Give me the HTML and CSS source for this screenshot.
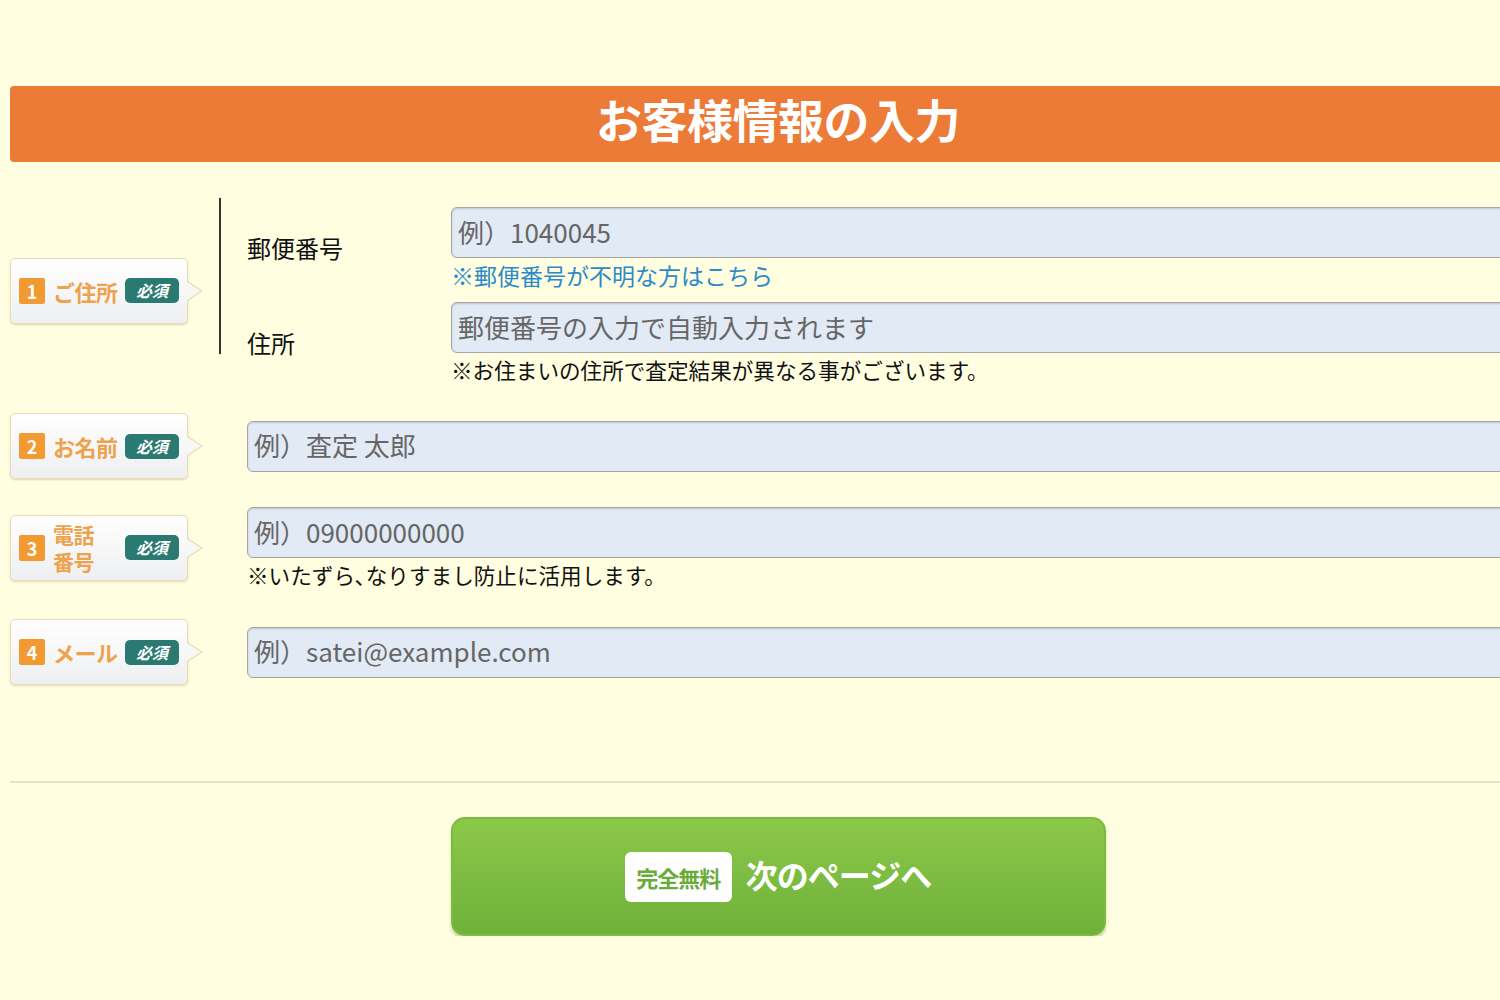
FILE: index.html
```html
<!DOCTYPE html>
<html lang="ja">
<head>
    <meta charset="UTF-8">
    <meta name="viewport" content="width=device-width, initial-scale=1.0">
    <title>お客様情報の入力</title>
    <link rel="stylesheet" href="styles.css">
</head>
<body>

    <div class="page">
        <h1 class="page-title">お客様情報の入力</h1>

        <form class="form" onsubmit="return false;">

            <!-- 1 住所 -->
            <div class="row row-address">
                <div class="tag-col tag-col-narrow">
                    <div class="tag">
                        <span class="tag-num">1</span>
                        <span class="tag-text">ご住所</span>
                        <span class="tag-req">必須</span>
                    </div>
                </div>
                <div class="sublabels">
                    <div class="sublabel">郵便番号</div>
                    <div class="sublabel sublabel-addr">住所</div>
                </div>
                <div class="fields">
                    <input class="field" type="text" placeholder="例）1040045">
                    <a class="field-link" href="#">※郵便番号が不明な方はこちら</a>
                    <input class="field field-addr" type="text" placeholder="郵便番号の入力で自動入力されます">
                    <p class="field-note">※お住まいの住所で査定結果が異なる事がございます。</p>
                </div>
            </div>

            <!-- 2 名前 -->
            <div class="row row-name">
                <div class="tag-col">
                    <div class="tag">
                        <span class="tag-num">2</span>
                        <span class="tag-text">お名前</span>
                        <span class="tag-req">必須</span>
                    </div>
                </div>
                <div class="fields">
                    <input class="field" type="text" placeholder="例）査定 太郎">
                </div>
            </div>

            <!-- 3 電話 -->
            <div class="row row-tel">
                <div class="tag-col">
                    <div class="tag">
                        <span class="tag-num">3</span>
                        <span class="tag-text tag-text-two">電話<br>番号</span>
                        <span class="tag-req">必須</span>
                    </div>
                </div>
                <div class="fields">
                    <input class="field" type="tel" placeholder="例）09000000000">
                    <p class="field-note">※いたずら､なりすまし防止に活用します。</p>
                </div>
            </div>

            <!-- 4 メール -->
            <div class="row row-mail">
                <div class="tag-col">
                    <div class="tag">
                        <span class="tag-num">4</span>
                        <span class="tag-text">メール</span>
                        <span class="tag-req">必須</span>
                    </div>
                </div>
                <div class="fields">
                    <input class="field" type="email" placeholder="例）satei@example.com">
                </div>
            </div>

        </form>

        <hr class="divider">

        <div class="actions">
            <button class="next-btn" type="button">
                <span class="free-badge">完全無料</span>
                <span class="next-text">次のページへ</span>
            </button>
        </div>
    </div>

</body>
</html>
```

FILE: styles.css
```css
html, body {
    margin: 0;
    padding: 0;
    background-color: #fffee0;
    overflow: hidden;
}

body {
    font-family: "Noto Sans CJK JP", "Noto Sans", sans-serif;
    color: #111;
}

.page {
    width: 1536px;
    margin-left: 10px;
    padding-top: 86px;
}

/* Orange heading bar */
.page-title {
    margin: 0;
    height: 76px;
    line-height: 64px;
    background-color: #ec7b37;
    border-radius: 4px;
    color: #fff;
    text-align: center;
    font-size: 46px;
    font-weight: bold;
    letter-spacing: -0.5px;
}

.form {
    margin-top: 36px;
}

.row {
    display: flex;
    align-items: center;
}

.row-name { margin-top: 30px; }
.row-tel  { margin-top: 28px; }
.row-mail { margin-top: 31px; }

.tag-col {
    width: 237px;
    flex-shrink: 0;
}

.tag-col-narrow {
    width: 209px;
}

/* Speech-bubble style labels */
.tag {
    position: relative;
    box-sizing: border-box;
    width: 178px;
    height: 66px;
    display: flex;
    align-items: center;
    padding: 0 8px;
    background: linear-gradient(#ffffff, #eeeff1);
    border: 1px solid #eadcb8;
    border-radius: 5px;
    box-shadow: 0 1px 2px rgba(160, 140, 90, 0.35);
}

.tag::before,
.tag::after {
    content: "";
    position: absolute;
    top: 50%;
    width: 0;
    height: 0;
    transform: translateY(-50%);
}

.tag::before {
    right: -16px;
    border-top: 10px solid transparent;
    border-bottom: 10px solid transparent;
    border-left: 15px solid #ecdcb9;
}

.tag::after {
    right: -14px;
    border-top: 9px solid transparent;
    border-bottom: 9px solid transparent;
    border-left: 14px solid #f7f7f6;
}

.tag-num {
    width: 26px;
    height: 26px;
    flex-shrink: 0;
    background-color: #f29a32;
    color: #fff;
    font-size: 18px;
    font-weight: bold;
    line-height: 26px;
    text-align: center;
    border-radius: 2px;
}

.tag-text {
    margin-left: 8px;
    color: #efa24d;
    font-size: 22px;
    font-weight: bold;
    letter-spacing: -0.5px;
    line-height: 28px;
}

.tag-text-two {
    font-size: 21px;
    line-height: 27px;
}

.tag-req {
    margin-left: auto;
    width: 54px;
    height: 25px;
    background-color: #2b7a72;
    border-radius: 5px;
    color: #fff;
    font-size: 16px;
    font-weight: bold;
    font-style: italic;
    line-height: 25px;
    text-align: center;
}

/* Address sub labels with the vertical rule */
.sublabels {
    align-self: flex-start;
    box-sizing: border-box;
    width: 232px;
    height: 156px;
    flex-shrink: 0;
    border-left: 2px solid #333;
    padding-left: 26px;
    padding-top: 35px;
}

.sublabel {
    font-size: 24px;
    line-height: 30px;
}

.sublabel-addr {
    margin-top: 65px;
}

.fields {
    flex: 1;
    min-width: 0;
}

.row-address .fields {
    padding-top: 9px;
}

.field {
    display: block;
    box-sizing: border-box;
    width: 100%;
    height: 51px;
    padding: 0 6px 3px;
    background-color: #e2eaf5;
    border: 1px solid #a5a49d;
    border-radius: 6px;
    font-family: "Noto Sans CJK JP", "Noto Sans", sans-serif;
    font-size: 26px;
    color: #333;
    box-shadow: inset 0 1px 2px rgba(0, 0, 0, 0.15);
}

.field::placeholder {
    color: #666;
}

.field-link {
    display: block;
    margin-top: 4px;
    color: #2c8ac9;
    font-size: 23px;
    line-height: 26px;
    text-decoration: none;
}

.field-addr {
    margin-top: 14px;
}

.field-note {
    margin: 4px 0 0;
    font-size: 21.6px;
    line-height: 26px;
    color: #111;
}

.divider {
    margin: 96px 0 0;
    border: none;
    border-top: 2px solid #e6e3cc;
}

.actions {
    display: flex;
    justify-content: center;
    margin-top: 34px;
}

/* Green next button */
.next-btn {
    box-sizing: border-box;
    width: 655px;
    height: 119px;
    display: flex;
    align-items: center;
    justify-content: center;
    gap: 14px;
    background: linear-gradient(#8cc84a, #6fb13a);
    border: 2px solid #7cba40;
    border-radius: 14px;
    box-shadow: 0 3px 3px rgba(90, 140, 40, 0.35);
    cursor: pointer;
    font-family: "Noto Sans CJK JP", "Noto Sans", sans-serif;
}

.free-badge {
    width: 107px;
    height: 50px;
    background-color: #fff;
    border-radius: 6px;
    color: #6aac3a;
    font-size: 22px;
    font-weight: bold;
    line-height: 50px;
    text-align: center;
    letter-spacing: -1px;
}

.next-text {
    color: #fff;
    font-size: 32px;
    font-weight: bold;
    letter-spacing: -1px;
    margin-bottom: 6px;
}
```
